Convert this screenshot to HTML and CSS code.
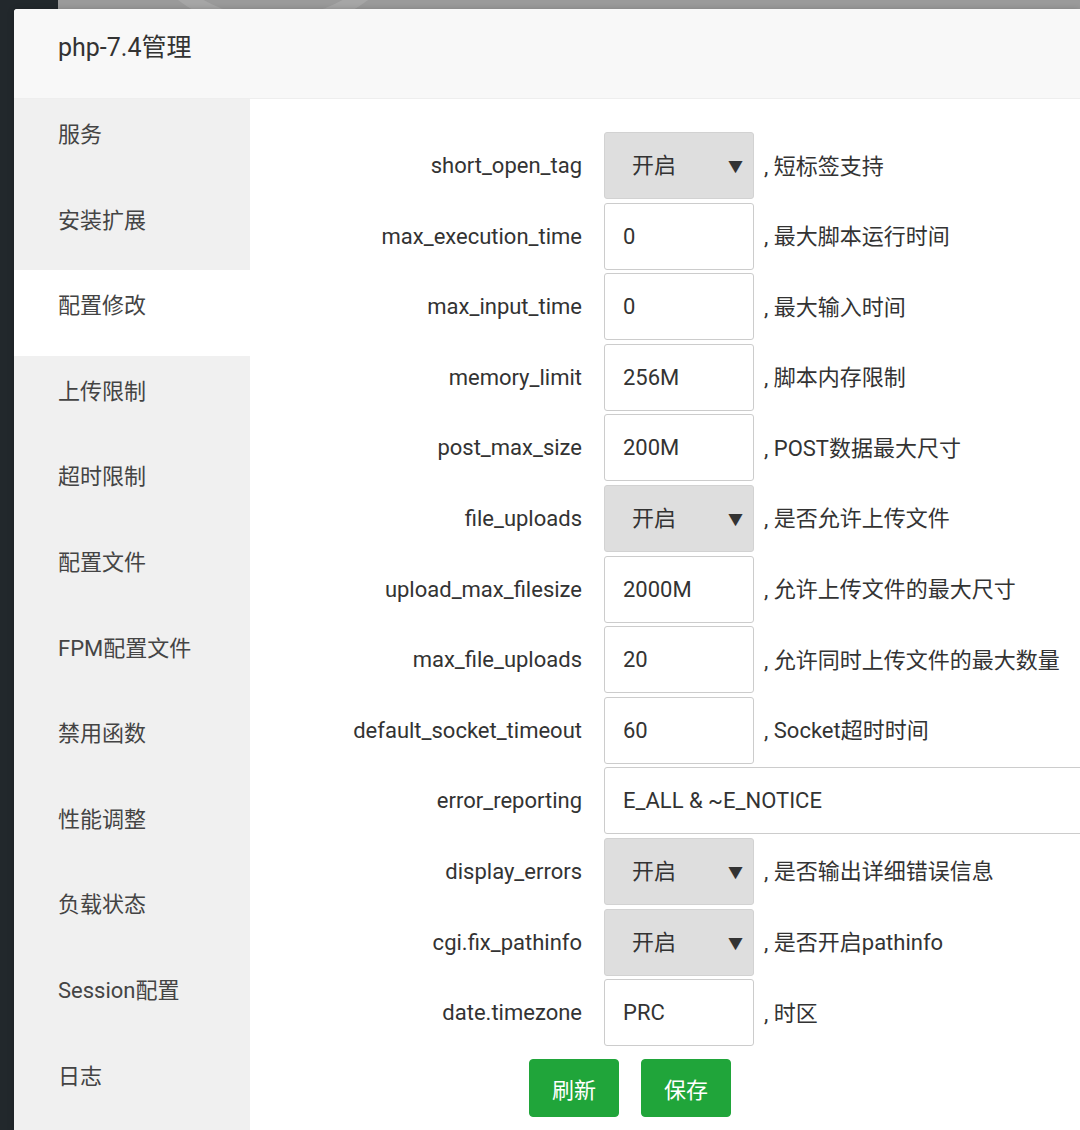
FILE: index.html
```html
<!DOCTYPE html>
<html>
<head>
    <meta charset="UTF-8">
    <title>php-7.4管理</title>
    <link rel="stylesheet" href="styles.css">
</head>
<body>
    <div class="backdrop">
        <div class="side-strip"></div>
        <svg class="spinner" width="340" height="40" viewBox="0 0 340 40">
            <circle cx="170" cy="-125" r="150" fill="none" stroke="#a6a6a6" stroke-width="14"/>
        </svg>
    </div>

    <div class="layer">
        <div class="layer-title">php-7.4管理</div>
        <div class="layer-body">
            <ul class="tab-menu">
                <li>服务</li>
                <li>安装扩展</li>
                <li class="active">配置修改</li>
                <li>上传限制</li>
                <li>超时限制</li>
                <li>配置文件</li>
                <li>FPM配置文件</li>
                <li>禁用函数</li>
                <li>性能调整</li>
                <li>负载状态</li>
                <li>Session配置</li>
                <li>日志</li>
            </ul>

            <div class="tab-content">
                <div class="form-row">
                    <span class="form-label">short_open_tag</span>
                    <span class="select-wrap"><select class="form-select"><option>开启</option><option>关闭</option></select></span>
                    <span class="form-tip">, 短标签支持</span>
                </div>
                <div class="form-row">
                    <span class="form-label">max_execution_time</span>
                    <input class="form-input" type="text" value="0">
                    <span class="form-tip">, 最大脚本运行时间</span>
                </div>
                <div class="form-row">
                    <span class="form-label">max_input_time</span>
                    <input class="form-input" type="text" value="0">
                    <span class="form-tip">, 最大输入时间</span>
                </div>
                <div class="form-row">
                    <span class="form-label">memory_limit</span>
                    <input class="form-input" type="text" value="256M">
                    <span class="form-tip">, 脚本内存限制</span>
                </div>
                <div class="form-row">
                    <span class="form-label">post_max_size</span>
                    <input class="form-input" type="text" value="200M">
                    <span class="form-tip">, POST数据最大尺寸</span>
                </div>
                <div class="form-row">
                    <span class="form-label">file_uploads</span>
                    <span class="select-wrap"><select class="form-select"><option>开启</option><option>关闭</option></select></span>
                    <span class="form-tip">, 是否允许上传文件</span>
                </div>
                <div class="form-row">
                    <span class="form-label">upload_max_filesize</span>
                    <input class="form-input" type="text" value="2000M">
                    <span class="form-tip">, 允许上传文件的最大尺寸</span>
                </div>
                <div class="form-row">
                    <span class="form-label">max_file_uploads</span>
                    <input class="form-input" type="text" value="20">
                    <span class="form-tip">, 允许同时上传文件的最大数量</span>
                </div>
                <div class="form-row">
                    <span class="form-label">default_socket_timeout</span>
                    <input class="form-input" type="text" value="60">
                    <span class="form-tip">, Socket超时时间</span>
                </div>
                <div class="form-row">
                    <span class="form-label">error_reporting</span>
                    <input class="form-input wide" type="text" value="E_ALL &amp; ~E_NOTICE">
                </div>
                <div class="form-row">
                    <span class="form-label">display_errors</span>
                    <span class="select-wrap"><select class="form-select"><option>开启</option><option>关闭</option></select></span>
                    <span class="form-tip">, 是否输出详细错误信息</span>
                </div>
                <div class="form-row">
                    <span class="form-label">cgi.fix_pathinfo</span>
                    <span class="select-wrap"><select class="form-select"><option>开启</option><option>关闭</option></select></span>
                    <span class="form-tip">, 是否开启pathinfo</span>
                </div>
                <div class="form-row">
                    <span class="form-label">date.timezone</span>
                    <input class="form-input" type="text" value="PRC">
                    <span class="form-tip">, 时区</span>
                </div>

                <div class="btn-row">
                    <button class="btn-green" type="button">刷新</button>
                    <button class="btn-green" type="button">保存</button>
                </div>
            </div>
        </div>
    </div>
</body>
</html>
```

FILE: styles.css
```css
html, body {
    margin: 0;
    padding: 0;
    height: 100%;
    overflow: hidden;
}

body {
    font-family: Roboto, "Noto Sans CJK SC", sans-serif;
    background-color: #9a9a9a;
    color: #333;
}

/* dimmed panel behind the dialog */
.backdrop {
    height: 100%;
}

.side-strip {
    width: 58px;
    height: 100%;
    background-color: #22282c;
}

.spinner {
    position: absolute;
    left: 103px;
    top: 0;
}

/* dialog, its right part is cut off by the screen */
.layer {
    position: absolute;
    left: 14px;
    top: 9px;
    right: 0;
    bottom: 0;
    overflow: hidden;
    background-color: #fff;
    border-radius: 3px 0 0 0;
    box-shadow: 0 1px 6px rgba(0, 0, 0, 0.25);
    display: flex;
    flex-direction: column;
}

.layer-title {
    height: 89px;
    line-height: 78px;
    padding-left: 44px;
    font-size: 25px;
    color: #333;
    background-color: #f8f8f8;
    border-bottom: 1px solid #eee;
    border-radius: 3px 0 0 0;
}

.layer-body {
    flex: 1;
    display: flex;
    min-width: 0;
}

.tab-menu {
    list-style: none;
    margin: 0;
    padding: 0;
    width: 236px;
    flex-shrink: 0;
    background-color: #f0f0f0;
}

.tab-menu li {
    height: 85.6px;
    line-height: 72px;
    padding-left: 44px;
    font-size: 22px;
    color: #444;
}

.tab-menu li.active {
    background-color: #fff;
}

.tab-content {
    flex: 1;
    min-width: 0;
    overflow: hidden;
    padding-top: 33px;
}

.form-row {
    display: flex;
    align-items: center;
    height: 67px;
    margin-bottom: 3.6px;
}

.form-label {
    width: 332px;
    flex-shrink: 0;
    padding-right: 22px;
    text-align: right;
    font-size: 22px;
    color: #333;
}

.form-input,
.form-select {
    box-sizing: border-box;
    width: 150px;
    height: 67px;
    border: 1px solid #ccc;
    border-radius: 3px;
    font-family: Roboto, "Noto Sans CJK SC", sans-serif;
    font-size: 22px;
    color: #333;
    margin: 0;
}

.form-input {
    flex-shrink: 0;
    padding: 0 0 0 18px;
    background-color: #fff;
}

.form-input.wide {
    width: 560px;
}

.select-wrap {
    position: relative;
    display: block;
    flex-shrink: 0;
}

.form-select {
    appearance: none;
    -webkit-appearance: none;
    background-color: #dedede;
    border-color: #d2d2d2;
    padding: 0 0 0 27px;
}

.select-wrap::after {
    content: "▼";
    position: absolute;
    right: 11px;
    top: 23px;
    font-size: 15px;
    color: #333;
    pointer-events: none;
}

.form-tip {
    margin-left: 10px;
    margin-bottom: 4px;
    font-size: 22px;
    color: #333;
    white-space: nowrap;
}

.btn-row {
    display: flex;
    gap: 22px;
    padding-left: 279px;
    margin-top: 13px;
}

.btn-green {
    width: 90px;
    height: 58px;
    border: 1px solid #20a53a;
    border-radius: 4px;
    background-color: #20a53a;
    color: #fff;
    font-family: Roboto, "Noto Sans CJK SC", sans-serif;
    font-size: 22px;
    cursor: pointer;
}
```
